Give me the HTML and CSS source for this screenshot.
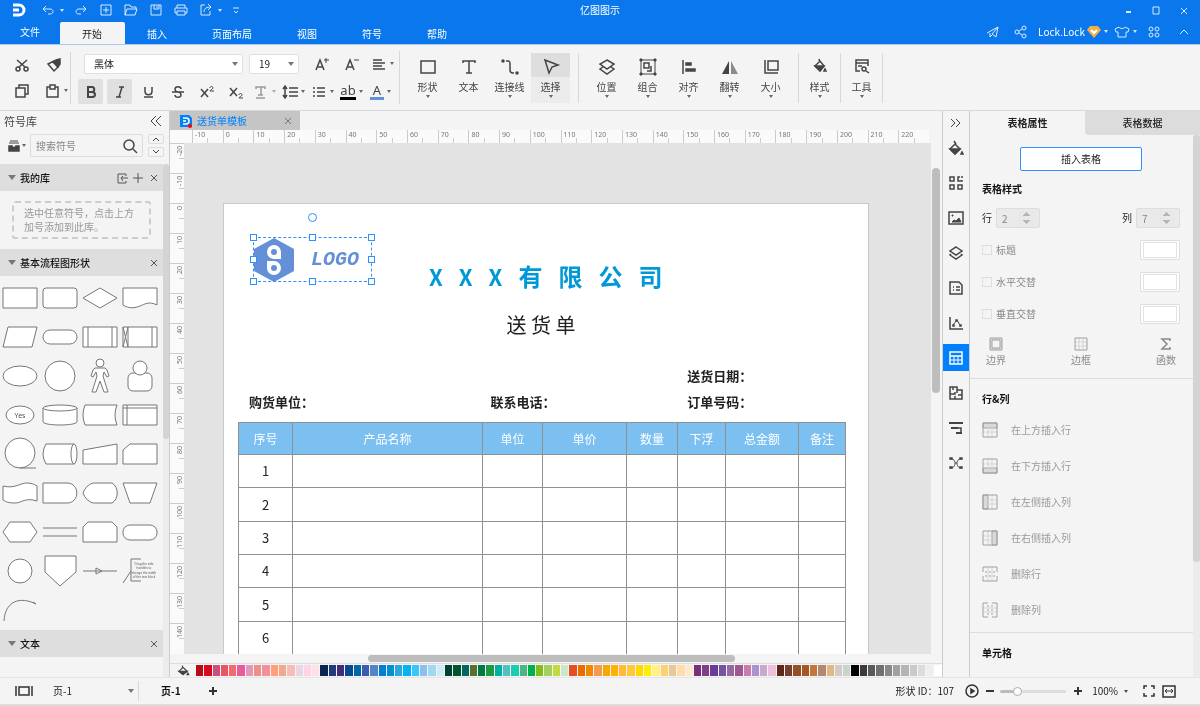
FILE: index.html
```html
<!DOCTYPE html>
<html lang="zh-CN">
<head>
    <meta charset="UTF-8">
    <title>亿图图示</title>

    <link rel="stylesheet" href="styles.css">
</head>
<body>
<header class="top">
    <div class="titlebar">
        <div class="quick">
            <svg class="brand" viewBox="0 0 14 14"><path d="M1 2h6a5 5 0 0 1 0 10H1M1 7h6"/></svg>
            <button class="undo" aria-label="撤销"><svg class="ico" viewBox="0 0 16 16"><path d="M6 4L3 7l3 3M3 7h7c4 0 4 5 0 5H8"/></svg></button>
            <i class="caret"></i>
            <button class="redo" aria-label="重做"><svg class="ico" viewBox="0 0 16 16"><path d="M10 4l3 3-3 3M13 7H6c-4 0-4 5 0 5h2"/></svg></button>
            <button aria-label="新建"><svg class="ico" viewBox="0 0 16 16"><path d="M3 3h10v10H3zM8 5v6M5 8h6"/></svg></button>
            <button aria-label="打开"><svg class="ico" viewBox="0 0 16 16"><path d="M2 13V3h5l1 2h5v2M2 13h10l2-6H4z"/></svg></button>
            <button aria-label="保存"><svg class="ico" viewBox="0 0 16 16"><path d="M3 3h10v10H3zM6 3v4h5V3M9 4v2"/></svg></button>
            <button aria-label="打印"><svg class="ico" viewBox="0 0 16 16"><path d="M4 6V3h8v3M4 11H2V6h12v5h-2M4 9h8v4H4z"/></svg></button>
            <button aria-label="导出"><svg class="ico" viewBox="0 0 16 16"><path d="M7 3H3v10h9V9M6 10c0-4 3-5 7-5M10 2l3 3-3 3"/></svg></button>
            <i class="caret"></i>
            <button class="more" aria-label="更多"><svg class="ico" viewBox="0 0 16 16"><path d="M5 6h6M6 9l2 2 2-2"/></svg></button>
        </div>
        <div class="win-title">亿图图示</div>
        <div class="win-btns">
            <button aria-label="最小化"><svg class="ico" viewBox="0 0 16 16"><path class="thick" d="M6 10h5"/></svg></button>
            <button aria-label="最大化"><svg class="ico" viewBox="0 0 16 16"><path d="M5 5h6v7H5z"/></svg></button>
            <button aria-label="关闭"><svg class="ico" viewBox="0 0 16 16"><path d="M5 6l6 6M11 6l-6 6"/></svg></button>
        </div>
    </div>
    <div class="menubar">
        <nav class="menu">
            <a href="#" class="file">文件</a>
            <a href="#" class="on">开始</a>
            <a href="#">插入</a>
            <a href="#">页面布局</a>
            <a href="#">视图</a>
            <a href="#">符号</a>
            <a href="#">帮助</a>
        </nav>
        <div class="account">
            <button aria-label="发送"><svg class="ico" viewBox="0 0 16 16"><path d="M2 9l11-6-2 10-4-3 6-7M5 9v4l2-2"/></svg></button>
            <button class="gap-l" aria-label="分享"><svg class="ico" viewBox="0 0 16 16"><circle cx="4" cy="8" r="2"/><circle cx="11" cy="4" r="2"/><circle cx="11" cy="12" r="2"/><path d="M6 7l3-2M6 9l3 2"/></svg></button>
            <span class="user">Lock.Lock</span>
            <svg class="vip" viewBox="0 0 14 12"><path class="gem" d="M3 0h8l3 4-7 8-7-8z"/><path class="vee" d="M4 4l3 3 3-3"/></svg>
            <i class="caret"></i>
            <button aria-label="皮肤"><svg class="ico" viewBox="0 0 16 16"><path d="M5 3L1 5l1 3h2v5h8V8h2l1-3-4-2c-1 2-5 2-6 0z"/></svg></button>
            <i class="caret"></i>
            <button class="apps" aria-label="应用"><svg class="ico" viewBox="0 0 16 16"><circle cx="5" cy="5" r="2"/><circle cx="11" cy="5" r="2"/><circle cx="5" cy="11" r="2"/><circle cx="11" cy="11" r="2"/></svg></button>
            <button class="fold" aria-label="收起"><svg class="ico" viewBox="0 0 16 16"><path d="M4 10l4-4 4 4"/></svg></button>
        </div>
    </div>
</header>

<div class="toolbar">
    <div class="clip">
        <button aria-label="剪切"><svg class="ico" viewBox="0 0 16 16"><circle cx="4" cy="12" r="2"/><circle cx="12" cy="12" r="2"/><path d="M3 3l8 7M13 3l-8 7"/></svg></button>
        <button aria-label="格式刷"><svg class="ico" viewBox="0 0 16 16"><path d="M2 7l6-3 4 6-4 4z"/><path class="fill" d="M7 5l3-2 4-1v5l-2 3z"/></svg></button>
        <button aria-label="复制"><svg class="ico" viewBox="0 0 16 16"><path d="M2 5h9v9H2zM5 5V2h9v9h-3"/></svg></button>
        <button aria-label="粘贴"><svg class="ico" viewBox="0 0 16 16"><path d="M5 4H2v10h11V4h-3M5 2h5v4H5z"/></svg><i class="caret"></i></button>
    </div>
    <div class="font">
        <div class="font-row">
            <select class="family" aria-label="字体"><option>黑体</option></select>
            <select class="size" aria-label="字号"><option>19</option></select>
            <button class="t" aria-label="增大字号"><svg class="ico" viewBox="0 0 16 16"><path d="M2 14L6 4l4 10M4 11h5"/><path class="thin" d="M10 4h5M12 2v5"/></svg></button>
            <button class="t" aria-label="减小字号"><svg class="ico" viewBox="0 0 16 16"><path d="M2 14L6 4l4 10M4 11h5"/><path class="thin" d="M10 4h5"/></svg></button>
            <button class="t" aria-label="对齐方式"><svg class="ico" viewBox="0 0 16 16"><path d="M2 4h9M2 7h12M2 10h9M2 13h12"/></svg><i class="caret"></i></button>
        </div>
        <div class="font-row">
            <button class="t on" aria-label="加粗"><svg class="ico" viewBox="0 0 16 16"><path class="thick" d="M5 3h4c3 0 3 5 0 5H5zM5 8h4c4 0 4 5 0 5H5z"/></svg></button>
            <button class="t on" aria-label="斜体"><svg class="ico" viewBox="0 0 16 16"><path d="M7 3h5M4 13h5M10 3L7 13"/></svg></button>
            <button class="t" aria-label="下划线"><svg class="ico" viewBox="0 0 16 16"><path d="M4 3v4c0 5 7 5 7 0V3M3 13h9"/></svg></button>
            <button class="t" aria-label="删除线"><svg class="ico" viewBox="0 0 16 16"><path d="M11 5c0-3-6-3-6 0 0 2 2 3 3 3s3 1 3 3c0 3-6 3-6 0M2 8h12"/></svg></button>
            <button class="t" aria-label="上标"><svg class="ico" viewBox="0 0 16 16"><path d="M2 5l7 8M9 5l-7 8"/><path class="thin" d="M11 4c0-2 3-2 3 0 0 1-3 2-3 3h4"/></svg></button>
            <button class="t" aria-label="下标"><svg class="ico" viewBox="0 0 16 16"><path d="M2 4l7 8M9 4l-7 8"/><path class="thin" d="M11 11c0-2 3-2 3 0 0 1-3 2-3 3h4"/></svg></button>
            <button class="t dim" aria-label="文字效果"><svg class="ico" viewBox="0 0 16 16"><path d="M3 5V3h9v2M8 3v8M5 11h5M3 14h9"/></svg><i class="caret"></i></button>
            <button class="t" aria-label="行距"><svg class="ico" viewBox="0 0 16 16"><path d="M3 3v10M1 5l2-3 2 3M1 11l2 3 2-3M7 4h9M7 8h9M7 12h9"/></svg><i class="caret"></i></button>
            <button class="t" aria-label="列表"><svg class="ico" viewBox="0 0 16 16"><path d="M2 4h2M2 8h2M2 12h2M6 4h8M6 8h8M6 12h8"/></svg><i class="caret"></i></button>
            <button class="t" aria-label="突出显示"><span class="hl">ab</span><i class="caret"></i></button>
            <button class="t" aria-label="字体颜色"><span class="fc">A</span><i class="caret"></i></button>
        </div>
    </div>
    <div class="group">
        <button class="tool"><svg class="big" viewBox="0 0 20 20"><path d="M3 4h14v12H3z"/></svg>形状<i class="caret"></i></button>
        <button class="tool"><svg class="big" viewBox="0 0 20 20"><path d="M4 6V4h12v2M10 4v12M7 16h6"/></svg>文本</button>
        <button class="tool"><svg class="big" viewBox="0 0 20 20"><path d="M6 4h2c2 0 2 1 2 3v6c0 2 1 3 3 3h1"/><circle class="fill" cx="3" cy="4" r="1"/><circle class="fill" cx="17" cy="16" r="1"/></svg>连接线<i class="caret"></i></button>
        <button class="tool on"><span class="cap"><svg class="big" viewBox="0 0 20 20"><path d="M4 4l13 5-6 2-3 6z"/></svg></span>选择<i class="caret"></i></button>
    </div>
    <div class="group">
        <button class="tool"><svg class="big" viewBox="0 0 20 20"><path d="M10 3l7 4-7 5-7-5zM6 10l-3 2 7 5 7-5-3-2"/></svg>位置<i class="caret"></i></button>
        <button class="tool"><svg class="big" viewBox="0 0 20 20"><path class="thin" d="M3 3h14v14H3z"/><path d="M6 6h5v5H6zM13 9v5H9"/><path class="fill thin" d="M2 2h2v2H2zM16 2h2v2h-2zM2 16h2v2H2zM16 16h2v2h-2z"/></svg>组合<i class="caret"></i></button>
        <button class="tool"><svg class="big" viewBox="0 0 20 20"><path d="M4 3v14"/><path class="fill" d="M7 6h5v2H7zM7 12h9v2H7z"/></svg>对齐<i class="caret"></i></button>
        <button class="tool"><svg class="big" viewBox="0 0 20 20"><path class="solid" d="M9 4v13H2z"/><path class="solid pale" d="M11 4v13h7z"/></svg>翻转<i class="caret"></i></button>
        <button class="tool"><svg class="big" viewBox="0 0 20 20"><path d="M7 4h10v9H7zM4 3v13h13"/></svg>大小<i class="caret"></i></button>
    </div>
    <div class="group narrow">
        <button class="tool"><svg class="big" viewBox="0 0 20 20"><path d="M9 2l1 3M5 9l5-5 4 5-4 5z"/><path class="fill" d="M5 9h9l-4 5zM15 12l1 2h-2z"/></svg>样式<i class="caret"></i></button>
    </div>
    <div class="group narrow">
        <button class="tool"><svg class="big" viewBox="0 0 20 20"><path d="M8 14H4V3h12v6M4 6h12M6 9h4"/><circle cx="12" cy="12" r="2"/><path d="M14 14l3 2"/></svg>工具<i class="caret"></i></button>
    </div>
</div>

<div class="main">
    <aside class="library">
        <div class="lib-head"><span>符号库</span><button aria-label="折叠"><svg class="ico" viewBox="0 0 16 16"><path class="thin" d="M8 3L3 8l5 5M13 3L8 8l5 5"/></svg></button></div>
        <div class="search">
            <button class="box" aria-label="选择符号库"><svg class="ico" viewBox="0 0 16 16"><path class="thin" d="M4 3h8M3 5h10"/><path class="fill" d="M3 8h3c0 2 4 2 4 0h3v5H3z"/></svg><i class="caret"></i></button>
            <div class="field">
                <input type="text" placeholder="搜索符号" aria-label="搜索符号">
                <svg class="ico" viewBox="0 0 16 16"><circle cx="7" cy="7" r="5"/><path d="M11 11l4 4"/></svg>
            </div>
            <div class="updown">
                <button aria-label="上一个"><svg viewBox="0 0 12 6"><path d="M3 5l3-3 3 3"/></svg></button>
                <button aria-label="下一个"><svg viewBox="0 0 12 6"><path d="M3 1l3 3 3-3"/></svg></button>
            </div>
        </div>
        <div class="lib-scroll">
            <div class="lib-body">
                <div class="sec">
                    <i class="tri"></i><b>我的库</b>
                    <button aria-label="导入"><svg class="ico" viewBox="0 0 16 16"><path class="thin" d="M12 6V4H4v9h8v-2M14 8H7M9 6L7 8l2 3"/></svg></button>
                    <button aria-label="新增"><svg class="ico" viewBox="0 0 16 16"><path class="thin" d="M8 3v10M3 8h10"/></svg></button>
                    <button aria-label="关闭"><svg class="ico" viewBox="0 0 16 16"><path class="thin" d="M5 5l6 6M11 5l-6 6"/></svg></button>
                </div>
                <p class="tip">选中任意符号，点击上方加号添加到此库。</p>
                <div class="sec">
                    <i class="tri"></i><b>基本流程图形状</b>
                    <button aria-label="关闭"><svg class="ico" viewBox="0 0 16 16"><path class="thin" d="M5 5l6 6M11 5l-6 6"/></svg></button>
                </div>
                <div class="shapes">
                    <svg viewBox="0 0 40 39"><path d="M3 10h34v20H3z"/></svg>
                    <svg viewBox="0 0 40 39"><rect x="3" y="10" width="34" height="20" rx="3"/></svg>
                    <svg viewBox="0 0 40 39"><path d="M20 10l17 10-17 10L3 20z"/></svg>
                    <svg viewBox="0 0 40 39"><path d="M3 10h34v17c-8-4-12-1-17 1s-11 3-17-1z"/></svg>

                    <svg viewBox="0 0 40 39"><path d="M8 10h29l-5 20H3z"/></svg>
                    <svg viewBox="0 0 40 39"><rect x="3" y="13" width="34" height="14" rx="7"/></svg>
                    <svg viewBox="0 0 40 39"><path d="M3 10h34v20H3zM8 10v20M32 10v20"/></svg>
                    <svg viewBox="0 0 40 39"><path d="M3 10h34v20H3zM8 10v20M32 10v20M3 10l5 20M8 10L3 30"/></svg>

                    <svg viewBox="0 0 40 39"><ellipse cx="20" cy="20" rx="17" ry="10"/></svg>
                    <svg viewBox="0 0 40 39"><circle cx="20" cy="20" r="15"/></svg>
                    <svg viewBox="0 0 40 39"><circle cx="20" cy="7" r="4"/><path d="M15 12h10l2 2 2 6-2 1-3-5-1 4 5 16h-4l-4-11-4 11h-4l5-16-1-4-3 5-2-1 2-6z"/></svg>
                    <svg viewBox="0 0 40 39"><rect x="8" y="17" width="24" height="18" rx="5"/><circle cx="20" cy="12" r="7"/></svg>

                    <svg viewBox="0 0 40 39"><ellipse cx="20" cy="20" rx="14" ry="9"/><text x="20" y="23">Yes</text></svg>
                    <svg viewBox="0 0 40 39"><path d="M3 13v14c2 4 32 4 34 0V13"/><ellipse cx="20" cy="13" rx="17" ry="3"/></svg>
                    <svg viewBox="0 0 40 39"><path d="M5 10h32q-4 10 0 20H5Q1 20 5 10z"/></svg>
                    <svg viewBox="0 0 40 39"><path d="M3 10h34v20H3zM3 13h34M7 10v20"/></svg>

                    <svg viewBox="0 0 40 39"><circle cx="20" cy="19" r="15"/><path d="M20 34h16"/></svg>
                    <svg viewBox="0 0 40 39"><path d="M34 10H6q-6 10 0 20h28"/><ellipse cx="34" cy="20" rx="3" ry="10"/></svg>
                    <svg viewBox="0 0 40 39"><path d="M3 16l34-6v20H3z"/></svg>
                    <svg viewBox="0 0 40 39"><path d="M10 10h27v20H3V16z"/></svg>

                    <svg viewBox="0 0 40 39"><path d="M3 13c12 3 17-3 24-3 4 0 7 1 10 3v15c-12-4-15 2-22 2-6 0-9-1-12-3z"/></svg>
                    <svg viewBox="0 0 40 39"><path d="M3 10h24c13 0 13 20 0 20H3z"/></svg>
                    <svg viewBox="0 0 40 39"><path d="M13 10h19c7 4 7 16 0 20H13Q6 28 3 20q3-8 10-10z"/></svg>
                    <svg viewBox="0 0 40 39"><path d="M3 10h34l-7 20H10z"/></svg>

                    <svg viewBox="0 0 40 39"><path d="M10 10h20l7 10-7 10H10L3 20z"/></svg>
                    <svg viewBox="0 0 40 39"><path d="M3 16h34M3 24h34"/></svg>
                    <svg viewBox="0 0 40 39"><path d="M8 10h24l5 5v15H3V15z"/></svg>
                    <svg viewBox="0 0 40 39"><rect x="3" y="13" width="34" height="15" rx="7"/></svg>

                    <svg viewBox="0 0 40 39"><circle cx="20" cy="20" r="12"/></svg>
                    <svg viewBox="0 0 40 39"><path d="M5 5h31v16L20 35 5 21z"/></svg>
                    <svg viewBox="0 0 40 39"><path d="M3 20h34M16 17l6 3-6 3z"/></svg>
                    <svg class="note" viewBox="0 0 40 39"><path d="M21 8H11v22h10M3 32l8-12"/><text x="24" y="14">Drag the side</text><text x="24" y="18">handles to</text><text x="24" y="23">change the width</text><text x="24" y="27">of the text block</text></svg>

                    <svg viewBox="0 0 40 39"><path class="open" d="M4 31C5 11 20 6 36 14M33 12l3 2"/></svg>
                </div>
                <div class="sec">
                    <i class="tri"></i><b>文本</b>
                    <button aria-label="关闭"><svg class="ico" viewBox="0 0 16 16"><path class="thin" d="M5 5l6 6M11 5l-6 6"/></svg></button>
                </div>
            </div>
            <div class="lib-bar"></div>
        </div>
    </aside>

    <section class="work">
        <div class="docs">
            <div class="doc-tab">
                <svg viewBox="0 0 14 14"><path class="sheet" d="M1 1h9l3 3v9H1z"/><path class="mark" d="M4 4h3a3 3 0 0 1 0 6H4M4 7h3"/><circle class="dot" cx="11" cy="12" r="2"/></svg>
                <a href="#">送货单模板</a>
                <button aria-label="关闭"><svg class="ico" viewBox="0 0 16 16"><path class="thin" d="M5 5l6 6M11 5l-6 6"/></svg></button>
            </div>
        </div>
        <div class="ruler-x" id="rulerX"></div>
        <div class="stage">
            <div class="ruler-y" id="rulerY"></div>
            <div class="canvas">
                <div class="page">
                    <div class="letterhead">
                        <div class="logo">
                            <svg viewBox="0 0 40 44"><path class="hex" d="M20 0l20 11v22L20 44 0 33V11z"/><path class="hole" d="M20 7a7 7 0 0 1 7 7v7h-7a7 7 0 0 1 0-14zM13 23h7a7 7 0 1 1-7 7z"/><circle class="hex" cx="20" cy="14" r="3"/><circle class="hex" cx="20" cy="30" r="3"/></svg>
                            <span>LOGO</span>
                            <i class="h tl"></i><i class="h tc"></i><i class="h tr"></i>
                            <i class="h ml"></i><i class="h mr"></i>
                            <i class="h bl"></i><i class="h bc"></i><i class="h br"></i>
                            <i class="spin"></i>
                        </div>
                        <h1><span class="x">X</span> <span class="x">X</span> <span class="x">X</span> <span>有</span> <span>限</span> <span>公</span> <span>司</span></h1>
                    </div>
                    <h2>送 货 单</h2>
                    <div class="info">
                        <span class="date">送货日期：</span>
                        <span>购货单位：</span>
                        <span>联系电话：</span>
                        <span>订单号码：</span>
                    </div>
                    <table>
                        <colgroup><col class="c1"><col class="c2"><col class="c3"><col class="c4"><col class="c5"><col class="c6"><col class="c7"><col class="c8"></colgroup>
                        <thead>
                        <tr><th>序号</th><th>产品名称</th><th>单位</th><th>单价</th><th>数量</th><th>下浮</th><th>总金额</th><th>备注</th></tr>
                        </thead>
                        <tbody>
                        <tr><td>1</td><td></td><td></td><td></td><td></td><td></td><td></td><td></td></tr>
                        <tr><td>2</td><td></td><td></td><td></td><td></td><td></td><td></td><td></td></tr>
                        <tr><td>3</td><td></td><td></td><td></td><td></td><td></td><td></td><td></td></tr>
                        <tr><td>4</td><td></td><td></td><td></td><td></td><td></td><td></td><td></td></tr>
                        <tr><td>5</td><td></td><td></td><td></td><td></td><td></td><td></td><td></td></tr>
                        <tr><td>6</td><td></td><td></td><td></td><td></td><td></td><td></td><td></td></tr>
                        </tbody>
                    </table>
                </div>
            </div>
            <div class="bar-y"><i></i></div>
        </div>
        <div class="bar-x"><i></i></div>
        <div class="palette">
            <svg class="ico" viewBox="0 0 16 16"><path d="M7 2l1 3M3 9l5-5 5 5-5 4z"/><path class="fill" d="M3 9h10l-5 4zM14 11l1 2h-2z"/></svg>
            <div class="colors" id="colors"></div>
        </div>
    </section>

    <nav class="strip">
        <button class="fold" aria-label="折叠"><svg class="ico" viewBox="0 0 16 16"><path class="thin" d="M3 4l4 4-4 4M8 4l4 4-4 4"/></svg></button>
        <button aria-label="填充"><svg class="ico" viewBox="0 0 16 16"><path d="M6 1l2 3M2 9l5-5 5 5-5 5z"/><path class="fill" d="M2 9h10l-5 5zM14 12l1 2h-2z"/></svg></button>
        <button aria-label="主题"><svg class="ico" viewBox="0 0 16 16"><path d="M2 2h4v4H2zM2 10h4v4H2zM10 10h4v4h-4zM12 2h-2v4h4V5M14 1v2"/></svg></button>
        <button aria-label="图片"><svg class="ico" viewBox="0 0 16 16"><path d="M1 2h14v12H1z"/><path class="fill thin" d="M4 12l2-2 2 1 3-3 2 4zM4 5h1v1H4z"/></svg></button>
        <button aria-label="图层"><svg class="ico" viewBox="0 0 16 16"><path d="M8 2l6 4-6 4-6-4zM3 9l-1 1 6 4 6-4-1-1"/></svg></button>
        <button aria-label="注释"><svg class="ico" viewBox="0 0 16 16"><path d="M2 2h9l3 3v9H2zM5 7h1M8 7h4M5 10h1M8 10h4"/></svg></button>
        <button aria-label="图表"><svg class="ico" viewBox="0 0 16 16"><path d="M2 2v12h13"/><path class="thin" d="M5 10l4-5 3 5"/><path class="fill" d="M8 5h1v1H8zM5 10h1v1H5zM12 10h1v1h-1z"/></svg></button>
        <button class="on" aria-label="表格"><svg class="ico" viewBox="0 0 16 16"><path d="M2 2h12v12H2zM2 6h12"/><path class="thin" d="M2 10h12M6 6v8M10 6v8"/></svg></button>
        <button aria-label="平面图"><svg class="ico" viewBox="0 0 16 16"><path d="M2 2h7v3h5v9H2zM5 2v3M9 5v3M2 9h5V7M7 14v-3M10 10h4"/></svg></button>
        <button aria-label="甘特图"><svg class="ico" viewBox="0 0 16 16"><path class="thick" d="M1 3h14M3 8h7M8 13h6"/><path d="M10 8h3v5"/></svg></button>
        <button aria-label="思维导图"><svg class="ico" viewBox="0 0 16 16"><path class="thin" d="M3 4c4 0 4 4 4 4s0 5-4 5M13 4c-4 0-4 4-4 4s0 5 4 5M7 8h2"/><path class="fill" d="M2 3h2v1H2zM12 3h2v1h-2zM2 12h2v1H2zM12 12h2v1h-2z"/></svg></button>
    </nav>

    <aside class="props">
        <div class="tabs"><button class="on">表格属性</button><button>表格数据</button></div>
        <div class="props-scroll">
            <div class="props-body">
                <section class="style">
                    <button class="insert">插入表格</button>
                    <h3>表格样式</h3>
                    <div class="line nums">
                        <label>行 <input type="number" value="2" disabled></label>
                        <label>列 <input type="number" value="7" disabled></label>
                    </div>
                    <div class="line"><label><input type="checkbox" disabled>标题</label><button class="pick" aria-label="标题颜色" disabled></button></div>
                    <div class="line"><label><input type="checkbox" disabled>水平交替</label><button class="pick" aria-label="水平交替颜色" disabled></button></div>
                    <div class="line"><label><input type="checkbox" disabled>垂直交替</label><button class="pick" aria-label="垂直交替颜色" disabled></button></div>
                    <div class="trio">
                        <button disabled><svg viewBox="0 0 16 16"><path class="shade" d="M2 2h12v12H2z"/><path class="hollow" d="M4 4h8v8H4z"/></svg>边界</button>
                        <button disabled><svg viewBox="0 0 16 16"><path class="soft" d="M6 2v12M10 2v12M2 6h12M2 10h12"/><path d="M2 2h12v12H2z"/></svg>边框</button>
                        <button disabled><svg viewBox="0 0 16 16"><path class="sum" d="M12 5V3H4l5 5-5 5h8v-2"/></svg>函数</button>
                    </div>
                </section>
                <section class="rows">
                    <h3>行&amp;列</h3>
                    <button disabled><svg viewBox="0 0 16 16"><path class="shade" d="M1 1h14v5H1z"/><path class="soft" d="M6 1v14M10 1v14M1 10h14"/><path d="M1 1h14v14H1z"/></svg>在上方插入行</button>
                    <button disabled><svg viewBox="0 0 16 16"><path class="shade" d="M1 10h14v5H1z"/><path class="soft" d="M6 1v14M10 1v14M1 6h14"/><path d="M1 1h14v14H1z"/></svg>在下方插入行</button>
                    <button disabled><svg viewBox="0 0 16 16"><path class="shade" d="M1 1h5v14H1z"/><path class="soft" d="M10 1v14M1 6h14M1 10h14"/><path d="M1 1h14v14H1z"/></svg>在左侧插入列</button>
                    <button disabled><svg viewBox="0 0 16 16"><path class="shade" d="M10 1h5v14h-5z"/><path class="soft" d="M6 1v14M1 6h14M1 10h14"/><path d="M1 1h14v14H1z"/></svg>在右侧插入列</button>
                    <button disabled><svg viewBox="0 0 16 16"><path class="soft" d="M6 1v14M10 1v14"/><path class="dash" d="M3 6h10M3 10h10"/><path d="M1 6V1h14v5M1 10v5h14v-5"/></svg>删除行</button>
                    <button disabled><svg viewBox="0 0 16 16"><path class="soft" d="M1 6h14M1 10h14"/><path class="dash" d="M6 3v10M10 3v10"/><path d="M6 1H1v14h5M10 1h5v14h-5"/></svg>删除列</button>
                </section>
                <section class="cell"><h3>单元格</h3></section>
            </div>
            <div class="props-bar"></div>
        </div>
    </aside>
</div>

<footer class="status">
    <button class="view" aria-label="页面视图"><svg viewBox="0 0 20 16"><path d="M2 3v10M18 3v10M5 4h10v8H5z"/></svg></button>
    <select class="page-sel" aria-label="页面"><option>页-1</option></select>
    <a href="#" class="page-on">页-1</a>
    <button aria-label="添加页面"><svg class="ico" viewBox="0 0 16 16"><path class="thick" d="M8 4v8M4 8h8"/></svg></button>
    <div class="right">
        <span>形状 ID：107</span>
        <button class="play" aria-label="播放"><svg class="ico" viewBox="0 0 16 16"><circle cx="8" cy="8" r="6"/><path class="fill" d="M7 6l3 2-3 2z"/></svg></button>
        <button aria-label="缩小"><svg class="ico" viewBox="0 0 16 16"><path class="thick" d="M4 8h8"/></svg></button>
        <input type="range" min="0" max="100" value="22" aria-label="缩放">
        <button aria-label="放大"><svg class="ico" viewBox="0 0 16 16"><path class="thick" d="M8 4v8M4 8h8"/></svg></button>
        <button class="zoom">100%<i class="caret"></i></button>
        <button aria-label="全屏"><svg class="ico" viewBox="0 0 16 16"><path d="M3 6V3h3M10 3h3v3M13 10v3h-3M6 13H3v-3"/></svg></button>
        <button class="fit" aria-label="适应宽度"><svg class="ico" viewBox="0 0 16 16"><path d="M2 3h12v11H2z"/><path class="thin" d="M4 8h8M6 6L4 8l2 2M10 6l2 2-2 2"/></svg></button>
    </div>
</footer>
<script src="main.js"></script>
</body>
</html>
```

FILE: styles.css
```css
*{
    margin: 0;
    padding: 0;
    box-sizing: border-box;
}
body{
    display: flex;
    flex-direction: column;
    height: 100vh;
    overflow: hidden;
    font: 10px/16px "Noto Sans CJK SC", sans-serif;
    color: #222;
    background-color: #f4f4f4;
}
button, input, select{
    font: inherit;
    color: inherit;
    border: 0;
    background: none;
}
button{
    display: flex;
    align-items: center;
    justify-content: center;
    flex-shrink: 0;
}
a{
    color: inherit;
    text-decoration: none;
}
svg{
    flex-shrink: 0;
    fill: none;
    stroke: currentColor;
}
.ico{
    width: 16px;
    height: 16px;
    stroke-width: 1.5;
}
.thin{
    stroke-width: 1;
}
.thick{
    stroke-width: 2;
}
.fill{
    fill: currentColor;
}
.caret{
    flex-shrink: 0;
    border: 2px solid transparent;
    border-top: 3px solid currentColor;
    border-bottom: 0;
    opacity: .8;
}

/* 顶部 */
.top{
    color: #fff;
    background-color: #0a77ec;
    border-bottom: 1px solid #a9c8ea;
}
.titlebar{
    display: grid;
    grid-template-columns: 1fr auto 1fr;
    height: 22px;
}
.titlebar .ico, .account .ico{
    stroke-width: 1;
    opacity: .85;
}
.quick{
    display: flex;
    align-items: center;
    padding: 0 0 2px 12px;
}
.quick button{
    width: 25px;
}
.quick .brand{
    width: 14px;
    height: 14px;
    stroke-width: 3;
}
.quick .undo{
    margin-left: 9px;
}
.quick .redo{
    margin-left: 4px;
}
.quick .more{
    margin-left: 1px;
}
.win-title{
    padding-top: 2px;
}
.win-btns{
    display: flex;
    justify-content: flex-end;
    align-items: center;
    padding: 0 8px 2px 0;
    gap: 12px;
}
.menubar{
    display: flex;
    justify-content: space-between;
    height: 22px;
}
.menu{
    display: flex;
}
.menu a{
    padding: 0 23px 0 22px;
    line-height: 23px;
}
.menu .file{
    padding: 0 20px;
    line-height: 20px;
}
.menu .on{
    color: #222;
    background-color: #f4f4f4;
    border-radius: 2px 2px 0 0;
}
.account{
    display: flex;
    align-items: center;
    padding: 0 8px 3px 0;
}
.account .gap-l{
    margin-left: 12px;
}
.user{
    margin-left: 9px;
}
.vip{
    width: 14px;
    height: 12px;
    margin: 0 3px 0 2px;
}
.vip .gem{
    fill: #f0b04a;
    stroke: none;
}
.vip .vee{
    stroke-width: 2;
}
.account button{
    margin-left: 6px;
}
.account .caret + button + .caret{
    margin-left: 3px;
}
.account .apps{
    margin-left: 9px;
}
.account .fold{
    margin-left: 14px;
}

/* 工具栏 */
.toolbar{
    display: flex;
    align-items: center;
    height: 66px;
    flex-shrink: 0;
    color: #444;
    border-bottom: 1px solid #d8d8d8;
}
.clip{
    display: grid;
    grid-template-columns: 32px 32px;
    grid-template-rows: 26px 26px;
    padding-left: 6px;
    width: 71px;
    border-right: 1px solid #d8d8d8;
}
.clip button, .t{
    gap: 3px;
}
.clip button:nth-child(4){
    padding-left: 4px;
}
.font{
    display: flex;
    flex-direction: column;
    gap: 3px;
    width: 329px;
    padding-left: 7px;
    border-right: 1px solid #d8d8d8;
}
.font-row{
    display: flex;
    align-items: center;
    gap: 4px;
    height: 25px;
}
.font select, .page-sel{
    appearance: none;
    height: 20px;
    color: #222;
    background: #fff url("data:image/svg+xml,%3Csvg xmlns='http://www.w3.org/2000/svg' width='6' height='4'%3E%3Cpath d='M0 0h6L3 4z' fill='%23777'/%3E%3C/svg%3E") no-repeat right 4px center;
    border: 1px solid #e0e0e0;
    border-radius: 2px;
    padding-left: 9px;
}
.font .family{
    width: 159px;
    margin-left: 6px;
}
.font .size{
    width: 50px;
    margin: 0 6px 0 2px;
}
.t{
    width: 25px;
    height: 25px;
}
.t.on{
    background-color: #e0e0e0;
    border-radius: 2px;
}
.t.dim{
    color: #999;
}
.font-row:first-child .t{
    width: 26px;
}
.hl, .fc{
    font-family: "Noto Sans", sans-serif;
    font-size: 13px;
    line-height: 13px;
    border-bottom: 3px solid #000;
}
.fc{
    padding: 0 3px;
    border-color: #6490d8;
}
.group{
    display: flex;
    gap: 2px;
    padding: 0 8px;
    border-right: 1px solid #d8d8d8;
}
.tool{
    display: flex;
    flex-direction: column;
    justify-content: flex-start;
    width: 39px;
    height: 50px;
    padding-top: 4px;
    line-height: 20px;
}
.tool .caret{
    margin-top: -2px;
}
.big{
    width: 20px;
    height: 20px;
    stroke-width: 1.5;
}
.big .solid{
    fill: currentColor;
    stroke: none;
}
.big .pale{
    opacity: .6;
}
.tool.on{
    padding-top: 0;
    background-color: #ececec;
}
.tool .cap{
    display: flex;
    justify-content: center;
    width: 100%;
    height: 24px;
    padding-top: 3px;
    background-color: #dedede;
}
.group.narrow{
    padding: 0 1px;
}

.main{
    display: flex;
    flex: 1;
    min-height: 0;
}

/* 符号库 */
.library{
    display: flex;
    flex-direction: column;
    width: 170px;
    flex-shrink: 0;
    border-right: 1px solid #ccc;
}
.lib-head{
    display: flex;
    justify-content: space-between;
    align-items: center;
    height: 20px;
    padding: 0 5px 0 4px;
    font-size: 11px;
    color: #444;
}
.search{
    display: flex;
    align-items: center;
    padding: 3px 5px 7px 7px;
    gap: 5px;
    color: #444;
}
.search .box{
    width: 18px;
}
.field{
    display: flex;
    align-items: center;
    flex: 1;
    min-width: 0;
    height: 23px;
    padding: 0 4px 0 5px;
    border: 1px solid #ddd;
    border-radius: 2px;
}
.field input{
    flex: 1;
    min-width: 0;
    outline: none;
}
.field input::placeholder{
    color: #888;
}
.updown{
    display: flex;
    flex-direction: column;
    gap: 3px;
}
.updown button{
    width: 16px;
    height: 10px;
    border: 1px solid #ddd;
    border-radius: 2px;
}
.updown svg{
    width: 12px;
    height: 6px;
}
.lib-scroll{
    display: flex;
    flex: 1;
    min-height: 0;
}
.lib-body{
    flex: 1;
    overflow: hidden;
}
.lib-bar{
    width: 6px;
    background-color: #ececec;
}
.lib-bar::before{
    content: "";
    display: block;
    height: 275px;
    border-radius: 3px;
    background-color: #d4d4d4;
}
.sec{
    display: flex;
    align-items: center;
    height: 27px;
    padding: 0 1px 0 8px;
    color: #555;
    background-color: #dedede;
}
.sec b{
    flex: 1;
    font-weight: 500;
    color: #111;
    margin-left: 4px;
}
.tri{
    border: 4px solid transparent;
    border-top: 5px solid #777;
    border-bottom: 0;
}
.tip{
    margin: 10px 12px;
    padding: 3px 10px;
    line-height: 14px;
    color: #999;
    border: 2px dashed #ccc;
    border-radius: 3px;
}
.shapes{
    display: grid;
    grid-template-columns: repeat(4, 40px);
    padding: 2px 0 1px;
}
.shapes svg{
    width: 40px;
    height: 39px;
    fill: #fff;
    stroke: #777;
}
.shapes text{
    font: 7px "Noto Sans", sans-serif;
    text-anchor: middle;
    fill: #555;
    stroke: none;
}
.shapes .note path, .shapes .open{
    fill: none;
}
.shapes .note text{
    font-size: 3px;
}

/* 画布 */
.work{
    display: flex;
    flex-direction: column;
    flex: 1;
    min-width: 0;
}
.docs{
    display: flex;
    height: 19px;
}
.doc-tab{
    display: flex;
    align-items: center;
    width: 130px;
    padding: 0 4px 0 9px;
    color: #0080ff;
    background-color: #c5c5c5;
}
.doc-tab > svg{
    width: 14px;
    height: 14px;
    stroke: none;
}
.doc-tab .sheet{
    fill: #0080ff;
}
.doc-tab .mark{
    stroke: #fff;
    stroke-width: 1.5;
}
.doc-tab .dot{
    fill: #f00;
}
.doc-tab a{
    flex: 1;
    margin-left: 4px;
}
.doc-tab button{
    color: #777;
}
.ruler-x{
    display: grid;
    grid-template-columns: repeat(24, 1fr);
    height: 13px;
    margin-right: 13px;
    padding-left: 22px;
    background-color: #fafafa;
    flex-shrink: 0;
}
.ruler-x span, .ruler-y span{
    font: 7px/9px "Noto Sans", sans-serif;
    color: #777;
}
.ruler-x span{
    padding-left: 2px;
    border-left: 1px solid #ccc;
    background: linear-gradient(#ccc, #ccc) no-repeat center bottom / 1px 5px;
}
.stage{
    display: flex;
    flex: 1;
    min-height: 0;
}
.ruler-y{
    width: 14px;
    overflow: hidden;
    background-color: #fafafa;
}
.ruler-y span{
    display: flex;
    justify-content: flex-end;
    height: 30px;
    padding: 0 5px 2px 0;
    writing-mode: vertical-rl;
    transform: rotate(180deg);
    border-bottom: 1px solid #ccc;
    background: linear-gradient(#ccc, #ccc) no-repeat left center / 5px 1px;
}
.canvas{
    flex: 1;
    min-width: 0;
    overflow: hidden;
    background-color: #e3e3e3;
}
.page{
    margin: 60px 62px 0 39px;
    padding: 33px 24px 20px 14px;
    border: 1px solid #c8c8c8;
    background-color: #fff;
}
.letterhead{
    display: flex;
    align-items: flex-start;
}
.logo{
    position: relative;
    display: flex;
    align-items: center;
    width: 119px;
    height: 45px;
    margin-left: 15px;
    border: 1px dashed #2f90ff;
    flex-shrink: 0;
}
.logo svg{
    width: 40px;
    height: 44px;
    stroke: none;
}
.hex{
    fill: #6490d8;
}
.hole{
    fill: #fff;
}
.logo span{
    margin-left: 17px;
    font: italic bold 20px "Liberation Mono", monospace;
    color: #6490d8;
}
/* 选框控制点 */
.h, .spin{
    position: absolute;
    width: 7px;
    height: 7px;
    border: 1px solid #2f90ff;
    background-color: #fff;
}
.tl, .tc, .tr{
    top: -4px;
}
.ml, .mr{
    top: 18px;
}
.bl, .bc, .br{
    bottom: -4px;
}
.tl, .ml, .bl{
    left: -4px;
}
.tc, .bc{
    left: 55px;
}
.tr, .mr, .br{
    right: -4px;
}
.spin{
    left: 54px;
    top: -25px;
    width: 9px;
    height: 9px;
    border-radius: 50%;
}
h1{
    display: flex;
    align-items: baseline;
    gap: 16px;
    margin: 21px 0 0 57px;
    font-size: 24px;
    line-height: 36px;
    color: #0099d8;
}
h1 .x{
    font-size: 22px;
}
h2{
    margin-top: 16px;
    font-size: 20px;
    font-weight: 400;
    line-height: 30px;
    text-align: center;
}
.info{
    display: grid;
    grid-template-columns: 242fr 197fr 157fr;
    margin: 23px 0 7px;
    padding-left: 11px;
    font-size: 13px;
    line-height: 26px;
    font-weight: 700;
}
.info .date{
    grid-column: 3;
}
table{
    width: 100%;
    table-layout: fixed;
    border-collapse: collapse;
    text-align: center;
}
th, td{
    height: 33px;
    border: 1px solid #909090;
    font-size: 13px;
}
th{
    height: 32px;
    font-size: 12px;
    font-weight: 400;
    color: #fff;
    background-color: #7cc0f2;
}
tr:nth-child(3n+2) td{
    height: 34px;
}
.c1{ width: 54px; }
.c2{ width: 190px; }
.c3{ width: 60px; }
.c4{ width: 84px; }
.c5{ width: 51px; }
.c6{ width: 48px; }
.c7{ width: 73px; }
.c8{ width: 47px; }
.bar-y{
    width: 11px;
    padding: 25px 2px 0 1px;
}
.bar-y i{
    display: block;
    height: 225px;
    border-radius: 4px;
    background-color: #bdbdbd;
}
.bar-x{
    height: 10px;
    padding: 1px 207px 1px 198px;
    flex-shrink: 0;
    border-bottom: 1px solid #ddd;
}
.bar-x i{
    display: block;
    height: 7px;
    border-radius: 4px;
    background-color: #bdbdbd;
}
.palette{
    display: flex;
    align-items: center;
    height: 13px;
    padding-left: 5px;
    gap: 5px;
    flex-shrink: 0;
    color: #444;
}
.palette .ico{
    height: 13px;
}
.colors{
    display: flex;
    flex: 1;
    gap: 1px;
    height: 11px;
}
.colors i{
    flex: 1;
}

/* 右侧图标 */
.strip{
    display: flex;
    flex-direction: column;
    gap: 8px;
    width: 28px;
    flex-shrink: 0;
    color: #444;
    border: 1px solid #ccc;
    border-width: 0 1px;
}
.strip button{
    height: 27px;
}
.strip .fold{
    height: 24px;
    margin-bottom: -9px;
}
.strip .on{
    color: #fff;
    background-color: #0080ff;
}

/* 属性面板 */
.props{
    display: flex;
    flex-direction: column;
    width: 230px;
    flex-shrink: 0;
}
.tabs{
    display: flex;
}
.tabs button{
    flex: 1;
    height: 24px;
    font-weight: 500;
    background-color: #dcdcdc;
    border-radius: 0 0 0 3px;
}
.tabs .on{
    font-weight: 700;
    background-color: transparent;
}
.props-scroll{
    display: flex;
    flex: 1;
    min-height: 0;
}
.props-body{
    flex: 1;
    overflow: hidden;
}
.props-bar{
    width: 7px;
    background-color: #ececec;
}
.props-bar::before{
    content: "";
    display: block;
    height: 427px;
    border-radius: 3px;
    background-color: #d4d4d4;
}
.props section{
    padding: 12px 13px 10px 12px;
    border-bottom: 1px solid #ddd;
}
.style{
    display: flex;
    flex-direction: column;
}
.insert{
    width: 122px;
    height: 24px;
    margin: 0 auto 10px;
    border: 1px solid #2f90ff;
    border-radius: 2px;
    background-color: #fff;
}
h3{
    font-size: 10px;
    font-weight: 700;
    color: #111;
}
.line{
    display: flex;
    justify-content: space-between;
    align-items: center;
    height: 20px;
    margin-top: 12px;
    color: #888;
}
.nums{
    margin: 11px 0 0;
    color: #222;
}
.line label{
    display: flex;
    align-items: center;
    gap: 4px;
}
.line input[type=number]{
    width: 44px;
    height: 20px;
    padding: 0 5px;
    color: #888;
    border: 1px solid #ddd;
    border-radius: 2px;
    background-color: #eaeaea;
}
.line input::-webkit-inner-spin-button{
    opacity: .5;
    mix-blend-mode: multiply;
}
.line input[type=checkbox]{
    appearance: none;
    width: 10px;
    height: 10px;
    border: 1px solid #ddd;
}
.pick{
    width: 40px;
    height: 20px;
    padding: 2px;
    border: 1px solid #ddd;
    border-radius: 2px;
    background-color: #fff;
}
.pick::before{
    content: "";
    width: 100%;
    height: 100%;
    border: 1px solid #e2e2e2;
}
.trio{
    display: flex;
    justify-content: space-between;
    margin-top: 12px;
    padding: 0 4px;
    color: #888;
}
.trio button{
    flex-direction: column;
}
.trio svg, .rows svg{
    width: 16px;
    height: 16px;
    stroke: #a0a0a0;
}
.props .shade{
    fill: #dadada;
}
.props .hollow{
    fill: #f4f4f4;
}
.props .soft{
    stroke: #d4d4d4;
}
.props .dash{
    stroke-dasharray: 2 2;
}
.props .sum{
    stroke: #888;
    stroke-width: 1.5;
}
.props .rows{
    display: flex;
    flex-direction: column;
    align-items: flex-start;
    padding-bottom: 14px;
}
.props .cell{
    border: 0;
}
.rows button{
    gap: 13px;
    height: 16px;
    margin-top: 20px;
    color: #999;
}
.rows h3 + button{
    margin-top: 15px;
}

/* 状态栏 */
.status{
    display: flex;
    align-items: center;
    height: 29px;
    padding: 0 23px 0 14px;
    border-top: 1px solid #e4e4e4;
    border-bottom: 2px solid #ddd;
    flex-shrink: 0;
}
.status .ico, .view{
    color: #333;
}
.view svg{
    width: 20px;
    height: 16px;
    stroke-width: 1.5;
}
.page-sel{
    width: 101px;
    padding-left: 15px;
    margin: 0 22px 0 4px;
    background-color: transparent;
    border: 0;
    border-right: 1px solid #d8d8d8;
    border-radius: 0;
}
.page-on{
    width: 44px;
    font-weight: 700;
    color: #111;
}
.right{
    display: flex;
    align-items: center;
    gap: 2px;
    margin-left: auto;
}
.play{
    margin-left: 8px;
}
.right input{
    appearance: none;
    width: 66px;
    height: 3px;
    margin-right: 2px;
    border-radius: 2px;
    background: linear-gradient(90deg, #bbb 25%, #ddd 25%);
}
.right input::-webkit-slider-thumb{
    appearance: none;
    width: 9px;
    height: 9px;
    border: 1px solid #aaa;
    border-radius: 50%;
    background-color: #fff;
}
.zoom{
    gap: 6px;
    margin: 0 11px 0 4px;
}
.fit{
    margin-left: 2px;
}
```

FILE: main.js
```js
var rulerX = document.getElementById('rulerX');
var rulerY = document.getElementById('rulerY');
var colors = document.getElementById('colors');

//刻度
function ruler(el, from, to) {
    for (var i = from; i <= to; i += 10) {
        var oSpan = document.createElement('span');
        oSpan.innerHTML = i;
        el.appendChild(oSpan);
    }
}
ruler(rulerX, -10, 220);
ruler(rulerY, -20, 140);

//色板
var list = 'b80a18 d90a1c c8507a ea5565 ee6b70 e85c9c e497b8 ee8f88 f2909c ffa07a f0a890 f6bcb8 ead4e8 ffd4e6 ffe0e6 ' +
    '0c2452 1f3c78 432c7c 064a8f 0068a6 3c5cae 5484c4 0080d0 0090d4 2ca8e0 00b4f4 36c8fc 8cc0ea a0d8f0 cdecf6 ' +
    '004030 005530 006860 587030 007a44 1c9a40 00b0a0 50c0c0 18cdb0 48b880 00b050 80c010 a4d060 c0da40 cce6c8 ' +
    'e55020 ee6a00 f08800 f69a50 f4a800 ffb000 ffba38 fcca38 ffd800 ffee00 fff088 ffd070 e8c898 ffdcaa fde8d0 ' +
    '783078 804088 683c98 74549c 9868a4 a05890 c87cb0 aa94d0 c8a8cc ecc0dc ' +
    '5c2818 783c30 925028 a85424 c07840 b48870 e0b888 d4ccc4 c8d4cc ' +
    '000000 3e3838 5a5858 707070 888888 a0a0a0 b4b4b4 cacaca dcdcdc eeeeee ffffff';
list.split(' ').forEach(function (c) {
    var oI = document.createElement('i');
    oI.style.backgroundColor = '#' + c;
    colors.appendChild(oI);
});
```
